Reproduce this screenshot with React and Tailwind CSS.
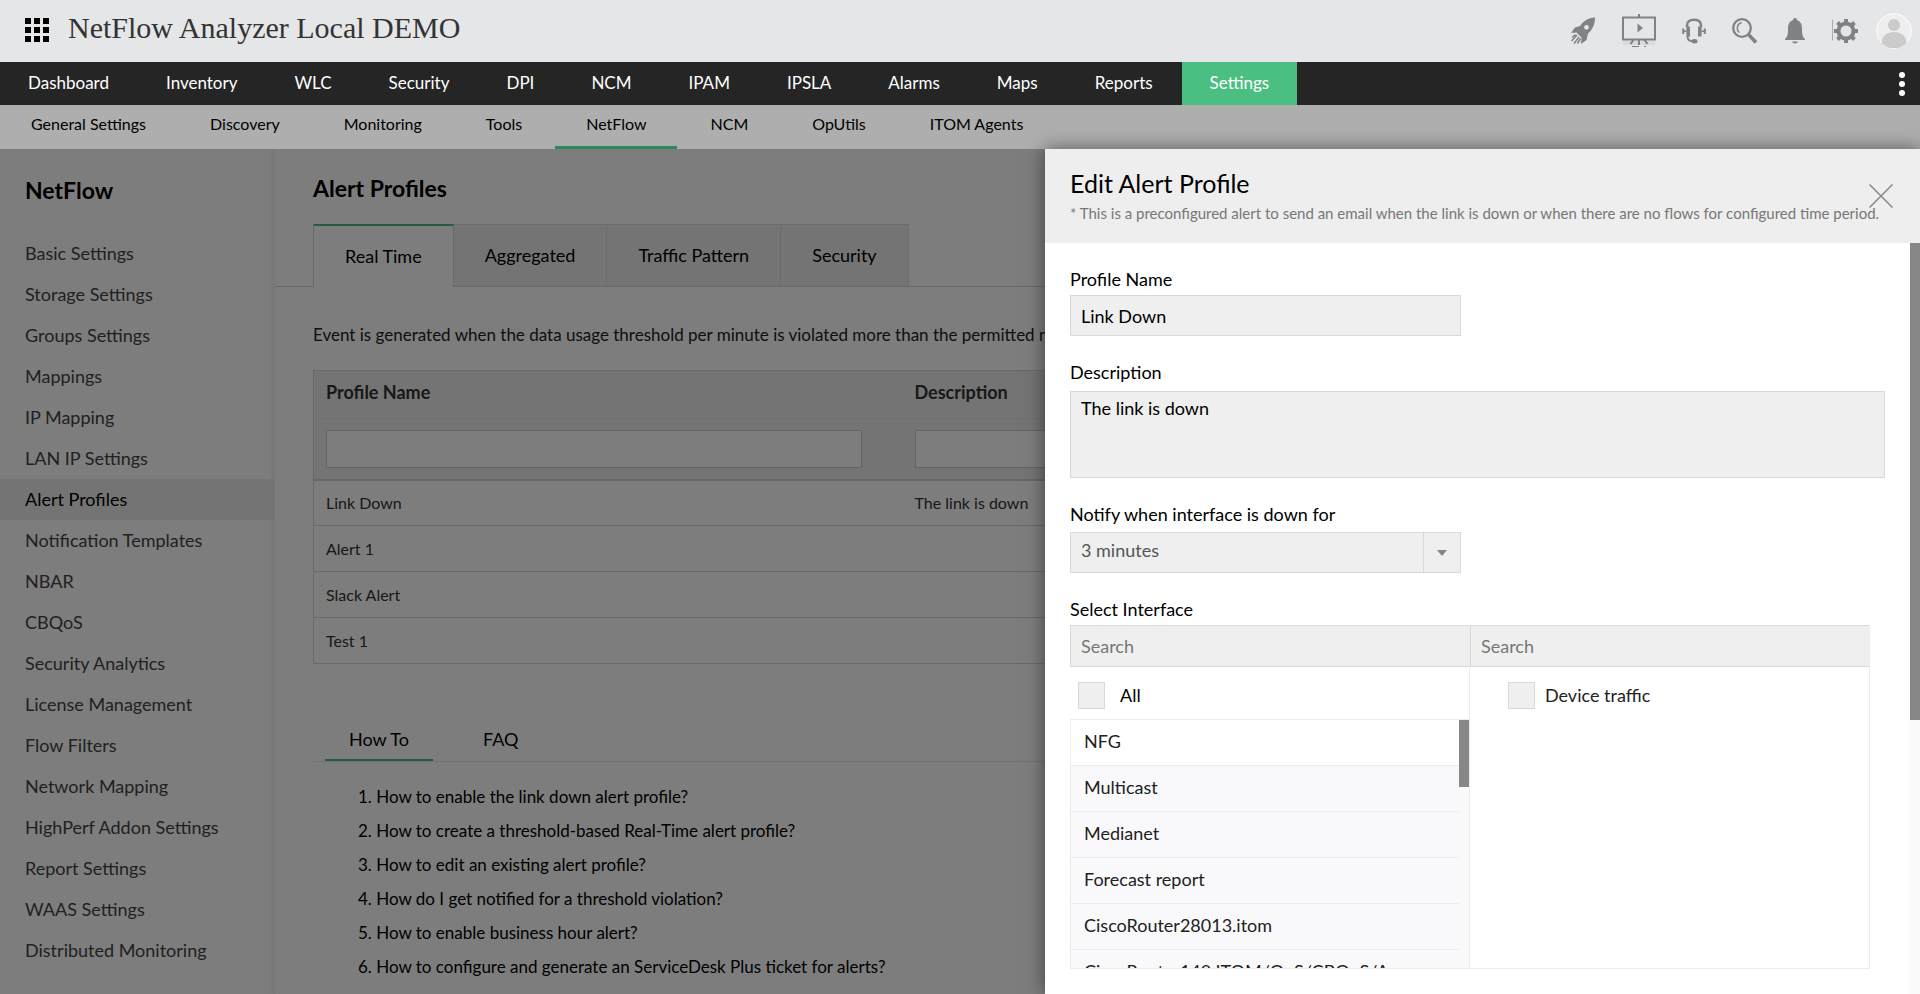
import React, { useState } from "react";

const mainNav = ["Dashboard", "Inventory", "WLC", "Security", "DPI", "NCM", "IPAM", "IPSLA", "Alarms", "Maps", "Reports", "Settings"];
const subNav = ["General Settings", "Discovery", "Monitoring", "Tools", "NetFlow", "NCM", "OpUtils", "ITOM Agents"];
const sideNav = [
    "Basic Settings", "Storage Settings", "Groups Settings", "Mappings", "IP Mapping", "LAN IP Settings",
    "Alert Profiles", "Notification Templates", "NBAR", "CBQoS", "Security Analytics", "License Management",
    "Flow Filters", "Network Mapping", "HighPerf Addon Settings", "Report Settings", "WAAS Settings", "Distributed Monitoring",
];
const tabs = ["Real Time", "Aggregated", "Traffic Pattern", "Security"];
const profiles = [
    { name: "Link Down", description: "The link is down" },
    { name: "Alert 1", description: "" },
    { name: "Slack Alert", description: "" },
    { name: "Test 1", description: "" },
];
const howTo = [
    "How to enable the link down alert profile?",
    "How to create a threshold-based Real-Time alert profile?",
    "How to edit an existing alert profile?",
    "How do I get notified for a threshold violation?",
    "How to enable business hour alert?",
    "How to configure and generate an ServiceDesk Plus ticket for alerts?",
];
const devices = ["NFG", "Multicast", "Medianet", "Forecast report", "CiscoRouter28013.itom", "CiscoRouter140.ITOM/QoS/CBQoS/A"];

function RocketIcon() {
    return (
        <svg width="26" height="28" viewBox="0 0 26 28" fill="#7e8386">
            <path fillRule="evenodd" d="M25 0.500C18.500 1 13 4 10 9L5 10.500 1 16l5.500-.5 5 5L11 27l5.500-4 1.500-6.500C22.500 13 25 7 25 0.500ZM16.500 7.900a2.400 2.400 0 1 1 0 4.800 2.400 2.400 0 0 1 0-4.800Z" />
            <path d="M7 18l-5.500 6M9 20l-5 6.500M10.500 21.500l-3 5M5.500 17.500L2 20.500" stroke="#7e8386" strokeWidth="1.500" fill="none" />
        </svg>
    )
}

function DemoIcon() {
    return (
        <svg width="34" height="34" viewBox="0 0 34 34" fill="none" stroke="#7e8386" strokeWidth="2">
            <path d="M1 27h32v4H1z" fill="#d9dadc" stroke="none" />
            <path d="M1 3.500h32v22H1zM17 0v3M17 26v5M11.500 26l-3 4M22.500 26l3 4" />
            <path d="M15.500 9.500v9l5.500-4.500z" fill="#7e8386" stroke="none" />
            <path d="M10 32.500h7M22 32.500h2" strokeWidth="1" />
        </svg>
    )
}

function HeadsetIcon() {
    return (
        <svg width="24" height="26" viewBox="0 0 24 26" fill="none" stroke="#7e8386">
            <path d="M5 9V7.500C5 3.500 7.500 1.800 12 1.800S19 3.500 19 7.500V9" strokeWidth="2.500" />
            <path d="M6.200 8.500v10M17.800 8.500v10" strokeWidth="3.500" />
            <path d="M1.200 10.500v5.500M22.800 10.500v5.500" strokeWidth="2" />
            <path d="M2 13.200h2.500M19.500 13.200H22" strokeWidth="1.500" />
            <path d="M5.500 18c0 3.500 1.500 5.200 5 5.200" strokeWidth="2" />
            <ellipse cx="12.500" cy="23.300" rx="3" ry="2.200" fill="#7e8386" stroke="none" />
        </svg>
    )
}

function SearchIcon() {
    return (
        <svg width="26" height="26" viewBox="0 0 26 26" fill="none" stroke="#7e8386">
            <circle cx="10" cy="10" r="8.800" strokeWidth="2.300" />
            <path d="M9.500 4.500C6.500 5.500 5.300 8 5.300 10.500c0 1.500.5 3 2 4" strokeWidth="1.500" />
            <path d="M16.500 16.500l7.500 8" strokeWidth="3.500" />
        </svg>
    )
}

function BellIcon() {
    return (
        <svg width="22" height="26" viewBox="0 0 22 26" fill="#7e8386">
            <path d="M9 2a2 2 0 0 1 4 0C17 3.500 18 6.500 18 11c0 5 .5 8 3 10v1H1v-1c2.500-2 3-5 3-10C4 6.500 5 3.500 9 2ZM8 23.500h6c-.5 1.300-1.500 2-3 2s-2.500-.7-3-2Z" />
        </svg>
    )
}

function GearIcon() {
    return (
        <svg width="26" height="26" viewBox="0 0 26 26" fill="none" stroke="#7e8386">
            <path d="M.5 1.500v21" strokeWidth="1" opacity=".6" />
            <circle cx="14" cy="13" r="7.500" strokeWidth="4" />
            <path d="M14 1v4M14 21v4M2 13h4M22 13h4M5.500 4.500l3 3M19.500 18.500l3 3M5.500 21.500l3-3M19.500 7.500l3-3" strokeWidth="4" />
        </svg>
    )
}

function AvatarIcon() {
    return (
        <svg width="36" height="36" viewBox="0 0 36 36">
            <clipPath id="avatarClip"><circle cx="18" cy="18" r="17.500" /></clipPath>
            <circle cx="18" cy="18" r="17.200" fill="#eee" stroke="#fff" />
            <g fill="#cbcbcb" clipPath="url(#avatarClip)">
                <circle cx="18" cy="12" r="6" />
                <path d="M5.500 31c0-8 5-12 12.500-12s12.500 4 12.500 12l-5 4h-15z" />
            </g>
        </svg>
    )
}

function Header() {
    return (
        <header className="flex h-[62px] items-center justify-between bg-[#e5e6e8] pr-2 pl-[25px]">
            <div className="flex items-center gap-[19px] pb-0.5">
                <button type="button" aria-label="Apps" className="grid grid-cols-3 gap-[3px]">
                    {Array.from({ length: 9 }).map((_, i) => <span key={i} className="size-[6px] bg-black" />)}
                </button>
                <h1 className="pb-1 font-['Roboto_Slab','Liberation_Serif',serif] text-[30px] leading-9 text-[#333]">NetFlow Analyzer Local DEMO</h1>
            </div>
            <div className="flex items-center gap-[26px]">
                <button type="button" aria-label="Getting started"><RocketIcon /></button>
                <button type="button" aria-label="Demo"><DemoIcon /></button>
                <button type="button" aria-label="Support"><HeadsetIcon /></button>
                <button type="button" aria-label="Search"><SearchIcon /></button>
                <button type="button" aria-label="Notifications"><BellIcon /></button>
                <div className="flex items-center gap-[18px]">
                    <button type="button" aria-label="Quick settings"><GearIcon /></button>
                    <button type="button" aria-label="Account"><AvatarIcon /></button>
                </div>
            </div>
        </header>
    )
}

function NavBars() {
    return (
        <>
            <nav className="flex h-[43px] items-stretch gap-px bg-[#252525] text-[17px] text-white">
                {mainNav.map((item) => (
                    <a key={item} href="#" className={item === "Settings" ? "flex items-center bg-[#4bbe82] px-7 pb-0.5" : "flex items-center px-7 pb-0.5"}>{item}</a>
                ))}
                <button type="button" aria-label="More" className="ml-auto flex flex-col items-center justify-center gap-[3px] pr-[15px]">
                    <span className="size-[6px] rounded-full bg-white" />
                    <span className="size-[6px] rounded-full bg-white" />
                    <span className="size-[6px] rounded-full bg-white" />
                </button>
            </nav>
            <nav className="flex h-11 items-stretch gap-0.5 bg-[#aeaeae] text-base text-black">
                {subNav.map((item) => (
                    <a key={item} href="#" className={item === "NetFlow" ? "border-b-3 border-[#2c8a58] px-[31px] pt-[7px]" : "px-[31px] pt-[7px]"}>{item}</a>
                ))}
            </nav>
        </>
    )
}

function Sidebar() {
    return (
        <aside className="w-[275px] shrink-0 shadow-[inset_-6px_0_6px_-4px_#ececec]">
            <h2 className="px-[25px] pt-[25px] pb-[27px] text-[23px] leading-8 font-bold">NetFlow</h2>
            <ul className="text-[18px] leading-[41px] text-[#444]">
                {sideNav.map((item) => (
                    <li key={item}>
                        <a href="#" className={item === "Alert Profiles" ? "block bg-[#ececec] px-[25px] text-black" : "block px-[25px]"}>{item}</a>
                    </li>
                ))}
            </ul>
        </aside>
    )
}

function AlertProfiles() {
    return (
        <main className="min-w-0 flex-1 text-[18px]">
            <h2 className="pt-[25px] pl-[38px] text-[23px] leading-7 font-bold">Alert Profiles</h2>
            <div className="mt-[22px] flex border-b border-[#d6d6d6] pl-[38px]">
                {tabs.map((tab, i) => (
                    <button key={tab} type="button" className={i === 0
                        ? "-mb-px h-[63px] border-x border-t-2 border-x-[#d6d6d6] border-t-[#4bbe82] bg-white px-[31px]"
                        : "h-[62px] border-t border-r border-[#dcdcdc] bg-[#ececec] px-[31px]"}>{tab}</button>
                ))}
            </div>
            <div className="pl-[38px]">
                <p className="mt-9 text-[17px] leading-6 whitespace-nowrap text-[#222]">Event is generated when the data usage threshold per minute is violated more than the permitted number of times.</p>
                <table className="mt-[23px] w-full table-fixed border border-[#d6d6d6] text-left text-[#333]">
                    <thead className="bg-[#ececec]">
                        <tr className="h-12 border-b border-[#e2e2e2]">
                            <th className="w-[589px] px-3 pb-1">Profile Name</th>
                            <th className="px-3 pb-1">Description</th>
                        </tr>
                        <tr className="h-[61px] border-b-2 border-[#d2d2d2]">
                            <td className="px-3"><input type="text" aria-label="Filter profile name" className="block h-[38px] w-[536px] border border-[#ccc] bg-white px-2" /></td>
                            <td className="px-3"><input type="text" aria-label="Filter description" className="block h-[38px] w-[536px] border border-[#ccc] bg-white px-2" /></td>
                        </tr>
                    </thead>
                    <tbody className="text-base">
                        {profiles.map((p) => (
                            <tr key={p.name} className="h-[46px] border-b border-[#d6d6d6]">
                                <td className="px-3">{p.name}</td>
                                <td className="px-3">{p.description}</td>
                            </tr>
                        ))}
                    </tbody>
                </table>
                <div className="mt-[53px] flex border-b border-[#e8e8e8] pl-3">
                    <button type="button" className="h-11 border-b-2 border-[#4bbe82] px-6 pt-0.5">How To</button>
                    <button type="button" className="h-11 px-[50px]">FAQ</button>
                </div>
                <ol className="mt-[18px] list-inside list-decimal pl-[45px] text-[17px] leading-[34px]">
                    {howTo.map((q) => <li key={q}><a href="#">{q}</a></li>)}
                </ol>
            </div>
        </main>
    )
}

function EditPanel() {
    const [name, setName] = useState("Link Down");
    const [description, setDescription] = useState("The link is down");

    return (
        <section className="absolute inset-y-0 right-0 flex w-[875px] max-w-full flex-col bg-white text-[18px] shadow-[0_0_18px_rgba(0,0,0,0.5)]">
            <div className="flex h-[94px] shrink-0 items-start bg-[#eee] pt-[18px] pr-[27px] pl-[25px]">
                <div className="min-w-0 flex-1">
                    <h2 className="text-[25px] leading-8">Edit Alert Profile</h2>
                    <p className="text-[15px] leading-7 whitespace-nowrap text-[#777]">* This is a preconfigured alert to send an email when the link is down or when there are no flows for configured time period.</p>
                </div>
                <button type="button" aria-label="Close" className="mt-[17px]">
                    <svg width="24" height="24" viewBox="0 0 24 24" stroke="#888" strokeWidth="1.500"><path d="M.5.500l23 23M23.500.500l-23 23" /></svg>
                </button>
            </div>
            <div className="flex min-h-0 flex-1">
                <form className="flex-1 overflow-hidden pt-6 pr-[25px] pl-[25px]">
                    <label htmlFor="profileName" className="block pb-1 leading-6">Profile Name</label>
                    <input id="profileName" type="text" value={name} onChange={(e) => setName(e.target.value)} className="block h-[41px] w-[391px] border border-[#d9d9d9] bg-[#efefef] px-[10px]" />
                    <label htmlFor="description" className="mt-6 block pb-[7px] leading-6">Description</label>
                    <textarea id="description" value={description} onChange={(e) => setDescription(e.target.value)} className="block h-[87px] w-full resize-none border border-[#d9d9d9] bg-[#efefef] px-[10px] py-[3px]" />
                    <label htmlFor="downFor" className="mt-6 block pb-[6px] leading-6">Notify when interface is down for</label>
                    <div className="relative w-[391px]">
                        <select id="downFor" className="block h-[41px] w-full appearance-none border border-[#d9d9d9] bg-[#efefef] px-[10px] pb-[5px] text-[#555]">
                            <option>3 minutes</option>
                        </select>
                        <span className="pointer-events-none absolute inset-y-0 right-0 flex w-[38px] items-center justify-center border border-[#d9d9d9]">
                            <svg width="10" height="6" viewBox="0 0 10 6" fill="#858585"><path d="M0 0h10L5 6z" /></svg>
                        </span>
                    </div>
                    <h3 className="mt-6 pb-1 leading-6">Select Interface</h3>
                    <div className="mr-[15px] flex border-b border-[#ececec]">
                        <div className="w-1/2 border-r border-[#ececec]">
                            <input type="text" aria-label="Search devices" placeholder="Search" className="block h-[42px] w-full border border-r-0 border-[#d9d9d9] bg-[#efefef] px-[10px] placeholder:text-[#777]" />
                            <label className="flex h-[52px] items-center gap-[15px] pt-[5px] pl-2">
                                <input type="checkbox" className="size-[27px] appearance-none border border-[#d9d9d9] bg-[#efefef]" />
                                All
                            </label>
                            <div className="flex h-[249px] border-t border-l border-[#ececec]">
                                <ul className="flex-1 overflow-hidden text-[#222]">
                                    {devices.map((d, i) => (
                                        <li key={d} className={i === 0 ? "h-[46px] border-b border-[#ececec] px-[13px] leading-[42px]" : "h-[46px] border-b border-[#ececec] bg-[#f9f9fb] px-[13px] leading-[42px]"}>{d}</li>
                                    ))}
                                </ul>
                                <div className="w-[10px] bg-[#fafafa]"><div className="h-[67px] bg-[#878787]" /></div>
                            </div>
                        </div>
                        <div className="w-1/2 border-r border-[#ececec]">
                            <input type="text" aria-label="Search interfaces" placeholder="Search" className="block h-[42px] w-full border border-r-0 border-[#d9d9d9] bg-[#efefef] px-[10px] placeholder:text-[#777]" />
                            <label className="flex h-[52px] items-center gap-[10px] pt-[5px] pl-[38px] text-[#222]">
                                <input type="checkbox" className="size-[27px] appearance-none border border-[#d9d9d9] bg-[#efefef]" />
                                Device traffic
                            </label>
                        </div>
                    </div>
                </form>
                <div className="w-[10px] bg-[#fafafa]"><div className="h-[477px] bg-[#878787]" /></div>
            </div>
        </section>
    )
}

function App() {
    return (
        <div className="flex h-screen flex-col overflow-hidden font-[Lato,sans-serif] text-black">
            <Header />
            <NavBars />
            <div className="relative flex min-h-0 flex-1 bg-white">
                <div className="flex min-w-0 flex-1 overflow-hidden">
                    <Sidebar />
                    <AlertProfiles />
                </div>
                <div className="absolute inset-0 bg-black/51" />
                <EditPanel />
            </div>
        </div>
    )
}

export default App;
